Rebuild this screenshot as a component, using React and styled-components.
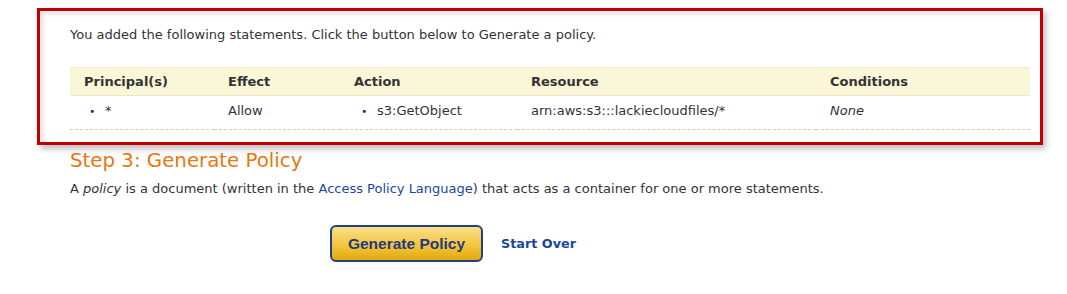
import React from 'react';
import styled, { createGlobalStyle } from 'styled-components';

const GlobalStyle = createGlobalStyle`
  body {
    margin: 0;
    background: #fff;
    font-family: "DejaVu Sans", Verdana, sans-serif;
    color: #333;
  }
`;

const Page = styled.div`
  width: 1067px;
  height: 294px;
  padding: 8px 24px 0 37px;
  box-sizing: border-box;
`;

const StatementsBox = styled.div`
  border: 3px solid #c00000;
  box-shadow: 3px 4px 6px rgba(0, 0, 0, 0.25), inset 3px 3px 5px rgba(0, 0, 0, 0.12);
  padding: 16px 10px 12px 30px;
  background: #fff;
`;

const Intro = styled.p`
  margin: 0 0 25px;
  font-size: 13px;
  color: #333;
`;

const Table = styled.table`
  width: 960px;
  border-collapse: collapse;
  table-layout: fixed;
  font-size: 13px;
`;

const Th = styled.th`
  width: ${p => p.$w - 14}px;
  text-align: left;
  font-weight: bold;
  color: #333;
  background: #faf6d8;
  border-top: 1px solid #f0ecc8;
  border-bottom: 1px solid #ece8c8;
  padding: 0 0 0 14px;
  height: 27px;
  font-size: 13px;
`;

const Td = styled.td`
  padding: 0 0 5px 14px;
  height: 28px;
  border-bottom: 1px dashed #d6d29a;
  color: #333;
  font-style: ${p => (p.$italic ? 'italic' : 'normal')};
  vertical-align: middle;
`;

const Bullet = styled.span`
  display: inline-block;
  padding-left: ${p => p.$indent}px;
  width: 16px;
  font-size: 11px;
`;

const Heading = styled.h2`
  margin: 4px 0 0 33px;
  font-size: 19.8px;
  font-weight: normal;
  color: #e47911;
`;

const Para = styled.p`
  margin: 9px 0 0 33px;
  font-size: 13px;
  color: #333;
`;

const Link = styled.a`
  color: #1a47a0;
  text-decoration: none;
`;

const Actions = styled.div`
  display: flex;
  align-items: center;
  gap: 18px;
  margin: 29px 0 0 293px;
`;

const GenerateButton = styled.button`
  width: 153px;
  height: 37px;
  border: 2px solid #22408a;
  border-radius: 6px;
  background: linear-gradient(to bottom, #fbe08a 0%, #f3c53f 55%, #e4a90a 100%);
  color: #1f3a80;
  font-family: "Liberation Sans", Arial, sans-serif;
  font-weight: bold;
  font-size: 15.5px;
  cursor: pointer;
`;

const StartOver = styled.a`
  font-family: "DejaVu Sans", Verdana, sans-serif;
  font-weight: bold;
  font-size: 12.8px;
  color: #1a47a0;
  text-decoration: none;
`;

export default function App() {
  return (
    <>
      <GlobalStyle />
      <Page>
        <StatementsBox>
          <Intro>You added the following statements. Click the button below to Generate a policy.</Intro>
          <Table>
            <thead>
              <tr>
                <Th $w={144}>Principal(s)</Th>
                <Th $w={126}>Effect</Th>
                <Th $w={177}>Action</Th>
                <Th $w={299}>Resource</Th>
                <Th $w={214}>Conditions</Th>
              </tr>
            </thead>
            <tbody>
              <tr>
                <Td><Bullet $indent={5}>•</Bullet>*</Td>
                <Td>Allow</Td>
                <Td><Bullet $indent={7}>•</Bullet>s3:GetObject</Td>
                <Td>arn:aws:s3:::lackiecloudfiles/*</Td>
                <Td $italic>None</Td>
              </tr>
            </tbody>
          </Table>
        </StatementsBox>
        <Heading>Step 3: Generate Policy</Heading>
        <Para>
          A <em>policy</em> is a document (written in the <Link href="#">Access Policy Language</Link>) that acts as a container for one or more statements.
        </Para>
        <Actions>
          <GenerateButton>Generate Policy</GenerateButton>
          <StartOver href="#">Start Over</StartOver>
        </Actions>
      </Page>
    </>
  );
}
